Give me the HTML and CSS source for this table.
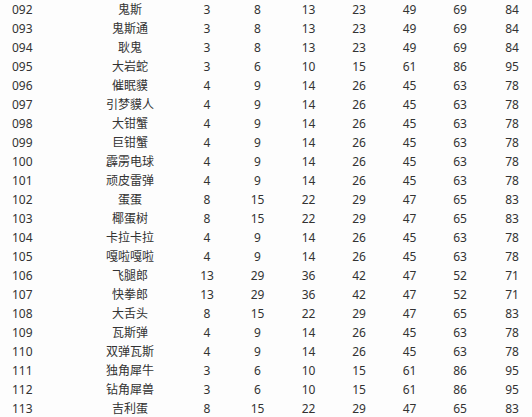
FILE: index.html
```html
<!DOCTYPE html>
<html lang="zh-CN">
<head>
<meta charset="utf-8">
<title>表</title>
<link rel="stylesheet" href="styles.css">
</head>
<body>
<table class="stats">
<colgroup>
<col class="c-id"><col class="c-name"><col class="c-n"><col class="c-n2"><col class="c-n2"><col class="c-n"><col class="c-n2"><col class="c-n"><col class="c-last">
</colgroup>
<tbody>
<tr><td class="id">092</td><td>鬼斯</td><td>3</td><td>8</td><td>13</td><td>23</td><td>49</td><td>69</td><td>84</td></tr>
<tr><td class="id">093</td><td>鬼斯通</td><td>3</td><td>8</td><td>13</td><td>23</td><td>49</td><td>69</td><td>84</td></tr>
<tr><td class="id">094</td><td>耿鬼</td><td>3</td><td>8</td><td>13</td><td>23</td><td>49</td><td>69</td><td>84</td></tr>
<tr><td class="id">095</td><td>大岩蛇</td><td>3</td><td>6</td><td>10</td><td>15</td><td>61</td><td>86</td><td>95</td></tr>
<tr><td class="id">096</td><td>催眠貘</td><td>4</td><td>9</td><td>14</td><td>26</td><td>45</td><td>63</td><td>78</td></tr>
<tr><td class="id">097</td><td>引梦貘人</td><td>4</td><td>9</td><td>14</td><td>26</td><td>45</td><td>63</td><td>78</td></tr>
<tr><td class="id">098</td><td>大钳蟹</td><td>4</td><td>9</td><td>14</td><td>26</td><td>45</td><td>63</td><td>78</td></tr>
<tr><td class="id">099</td><td>巨钳蟹</td><td>4</td><td>9</td><td>14</td><td>26</td><td>45</td><td>63</td><td>78</td></tr>
<tr><td class="id">100</td><td>霹雳电球</td><td>4</td><td>9</td><td>14</td><td>26</td><td>45</td><td>63</td><td>78</td></tr>
<tr><td class="id">101</td><td>顽皮雷弹</td><td>4</td><td>9</td><td>14</td><td>26</td><td>45</td><td>63</td><td>78</td></tr>
<tr><td class="id">102</td><td>蛋蛋</td><td>8</td><td>15</td><td>22</td><td>29</td><td>47</td><td>65</td><td>83</td></tr>
<tr><td class="id">103</td><td>椰蛋树</td><td>8</td><td>15</td><td>22</td><td>29</td><td>47</td><td>65</td><td>83</td></tr>
<tr><td class="id">104</td><td>卡拉卡拉</td><td>4</td><td>9</td><td>14</td><td>26</td><td>45</td><td>63</td><td>78</td></tr>
<tr><td class="id">105</td><td>嘎啦嘎啦</td><td>4</td><td>9</td><td>14</td><td>26</td><td>45</td><td>63</td><td>78</td></tr>
<tr><td class="id">106</td><td>飞腿郎</td><td>13</td><td>29</td><td>36</td><td>42</td><td>47</td><td>52</td><td>71</td></tr>
<tr><td class="id">107</td><td>快拳郎</td><td>13</td><td>29</td><td>36</td><td>42</td><td>47</td><td>52</td><td>71</td></tr>
<tr><td class="id">108</td><td>大舌头</td><td>8</td><td>15</td><td>22</td><td>29</td><td>47</td><td>65</td><td>83</td></tr>
<tr><td class="id">109</td><td>瓦斯弹</td><td>4</td><td>9</td><td>14</td><td>26</td><td>45</td><td>63</td><td>78</td></tr>
<tr><td class="id">110</td><td>双弹瓦斯</td><td>4</td><td>9</td><td>14</td><td>26</td><td>45</td><td>63</td><td>78</td></tr>
<tr><td class="id">111</td><td>独角犀牛</td><td>3</td><td>6</td><td>10</td><td>15</td><td>61</td><td>86</td><td>95</td></tr>
<tr><td class="id">112</td><td>钻角犀兽</td><td>3</td><td>6</td><td>10</td><td>15</td><td>61</td><td>86</td><td>95</td></tr>
<tr><td class="id">113</td><td>吉利蛋</td><td>8</td><td>15</td><td>22</td><td>29</td><td>47</td><td>65</td><td>83</td></tr>
</tbody>
</table>
</body>
</html>
```

FILE: styles.css
```css
html, body {
  margin: 0;
  padding: 0;
  background: #fdfdfd;
  overflow: hidden;
}

.stats {
  table-layout: fixed;
  width: 539px;
  border-collapse: collapse;
  border-spacing: 0;
  font-family: "Noto Sans", "Noto Sans CJK SC", sans-serif;
  font-size: 12px;
  color: #333;
}

.c-id { width: 78px; }
.c-name { width: 104px; }
.c-n { width: 50px; }
.c-n2 { width: 51px; }
.c-last { width: 54px; }

.stats td {
  height: 19px;
  padding: 0;
  line-height: 19px;
  text-align: center;
  white-space: nowrap;
}

.stats td.id {
  text-align: left;
  padding-left: 12px;
}
```
